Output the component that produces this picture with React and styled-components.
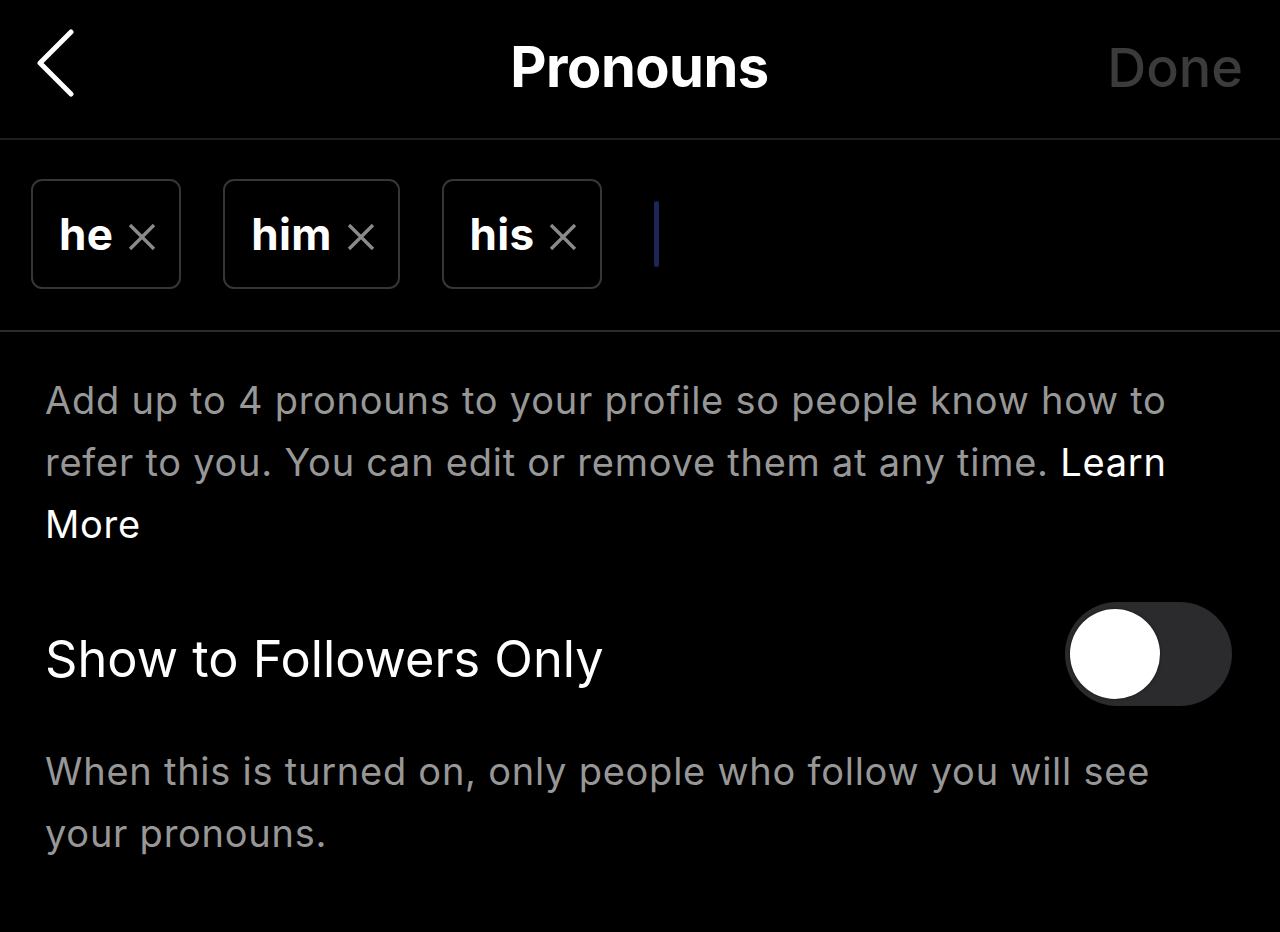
import React from "react";
import styled, { createGlobalStyle } from "styled-components";

const Global = createGlobalStyle`
  html, body { margin: 0; padding: 0; background: #000; }
  body { font-family: Inter, "Liberation Sans", Arial, sans-serif; -webkit-font-smoothing: antialiased; }
  * { box-sizing: border-box; }
`;

const Screen = styled.div`
  width: 1280px;
  height: 932px;
  background: #000;
  color: #fff;
  display: flex;
  flex-direction: column;
  overflow: hidden;
`;

const Header = styled.header`
  height: 140px;
  flex: none;
  display: grid;
  grid-template-columns: 1fr auto 1fr;
  align-items: center;
  padding: 0 37px 4px 36px;
  border-bottom: 2px solid #1d1d1d;
`;

const BackButton = styled.button`
  justify-self: start;
  background: none;
  border: 0;
  padding: 0;
  margin-top: -8px;
  width: 40px;
  height: 70px;
  display: flex;
  align-items: center;
  cursor: pointer;
`;

const Title = styled.h1`
  margin: 0;
  font-size: 56px;
  font-weight: 700;
  letter-spacing: -0.5px;
  color: #fff;
`;

const DoneButton = styled.button`
  justify-self: end;
  background: none;
  border: 0;
  padding: 0;
  font-family: inherit;
  font-size: 54px;
  font-weight: 500;
  color: #3b3b3b;
`;

const ChipRow = styled.div`
  flex: none;
  display: flex;
  align-items: center;
  gap: 42px;
  padding: 39px 31px 41px;
  border-bottom: 2px solid #2b2b2b;
`;

const Chip = styled.div`
  height: 110px;
  display: flex;
  align-items: center;
  gap: 15px;
  padding: 0 23px 0 26px;
  border: 2px solid #363636;
  border-radius: 11px;
  font-size: 44px;
  font-weight: 700;
  color: #fff;
  letter-spacing: 0.3px;
`;

const Remove = styled.span`
  display: flex;
  align-items: center;
  margin-top: 6px;
`;

const Caret = styled.span`
  width: 5px;
  height: 66px;
  margin-left: 10px;
  border-radius: 3px;
  background: #1c2658;
`;

const Body = styled.div`
  display: flex;
  flex-direction: column;
  padding: 37px 48px 0 45px;
`;

const Note = styled.p`
  margin: 0;
  max-width: 1150px;
  font-size: 38px;
  line-height: 62px;
  color: #979797;
  letter-spacing: 0.75px;
`;

const Link = styled.span`
  color: #fff;
`;

const ToggleRow = styled.div`
  display: flex;
  align-items: center;
  justify-content: space-between;
  margin-top: 47px;
  margin-bottom: 34px;
`;

const ToggleLabel = styled.span`
  font-size: 50.5px;
  color: #fff;
  margin-top: 8px;
`;

const Track = styled.div`
  width: 167px;
  height: 104px;
  border-radius: 52px;
  background: #2b2b2d;
  padding: 7px 5px;
  display: flex;
  justify-content: ${(p) => (p.$on ? "flex-end" : "flex-start")};
`;

const Knob = styled.div`
  width: 90px;
  height: 90px;
  border-radius: 50%;
  background: #fff;
  box-shadow: 0 0 3px rgba(0, 0, 0, 0.5);
`;

const XIcon = () => (
  <svg width="28" height="26" viewBox="0 0 28 26">
    <path d="M2 1 L26 25 M26 1 L2 25" stroke="#8a8a8a" strokeWidth="3.4" strokeLinecap="butt" />
  </svg>
);

const Chevron = () => (
  <svg width="40" height="68" viewBox="0 0 40 68">
    <path d="M35 3 L4 34 L35 65" fill="none" stroke="#fff" strokeWidth="5" strokeLinecap="round" strokeLinejoin="round" />
  </svg>
);

const pronouns = ["he", "him", "his"];

export default function App() {
  return (
    <Screen>
      <Global />
      <Header>
        <BackButton aria-label="Back">
          <Chevron />
        </BackButton>
        <Title>Pronouns</Title>
        <DoneButton>Done</DoneButton>
      </Header>
      <ChipRow>
        {pronouns.map((p) => (
          <Chip key={p}>
            {p}
            <Remove>
              <XIcon />
            </Remove>
          </Chip>
        ))}
        <Caret />
      </ChipRow>
      <Body>
        <Note>
          Add up to 4 pronouns to your profile so people know how to refer to you. You can edit or
          remove them at any time. <Link>Learn More</Link>
        </Note>
        <ToggleRow>
          <ToggleLabel>Show to Followers Only</ToggleLabel>
          <Track $on={false}>
            <Knob />
          </Track>
        </ToggleRow>
        <Note>When this is turned on, only people who follow you will see your pronouns.</Note>
      </Body>
    </Screen>
  );
}
